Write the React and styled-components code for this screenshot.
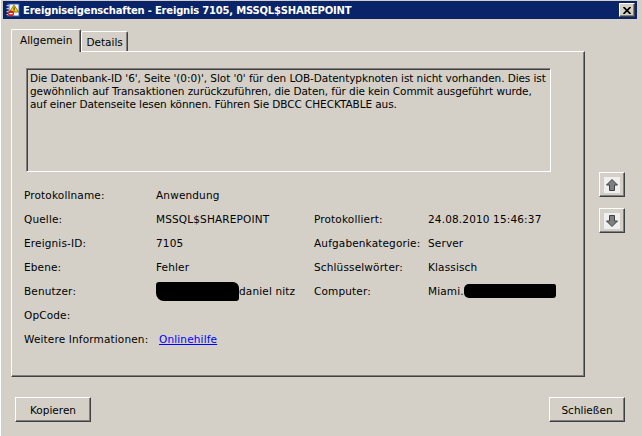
import React from 'react';
import styled, { createGlobalStyle } from 'styled-components';

const FONT = `"DejaVu Sans", "Liberation Sans", sans-serif`;

const GlobalStyle = createGlobalStyle`
  html, body { margin: 0; padding: 0; background: #d4d0c8; }
  body {
    width: 642px; height: 436px; overflow: hidden;
    font-family: ${FONT}; font-size: 10.5px; color: #000;
  }
`;

const Window = styled.div`
  width: 642px; height: 436px; box-sizing: border-box;
  padding: 1px 5px 0 2px;
  display: flex; flex-direction: column;
  background: #d4d0c8;
  border-left: 1px solid #fff;
`;

const TitleBar = styled.div`
  height: 18px; flex: none;
  background: #0a246a;
  display: flex; align-items: center;
  padding: 0 2px 0 3px; gap: 3px;
  color: #fff; font-weight: bold; font-size: 10px;
`;

const TitleText = styled.span`
  flex: 1; white-space: nowrap; letter-spacing: -0.2px;
`;

const RaisedBtn = styled.button`
  box-sizing: border-box;
  background: #d4d0c8;
  border: 1px solid; border-color: #fff #404040 #404040 #fff;
  box-shadow: inset -1px -1px 0 #808080;
  padding: 0; margin: 0;
  display: flex; align-items: center; justify-content: center;
  font-family: ${FONT}; font-size: 10.5px; color: #000;
`;

const CloseBtn = styled(RaisedBtn)`
  width: 16px; height: 14px;
`;

const Body = styled.div`
  display: flex; margin-top: 10px; padding-left: 8px; gap: 14px;
`;

const MainCol = styled.div`
  width: 574px; display: flex; flex-direction: column;
`;

const TabStrip = styled.div`
  display: flex; align-items: flex-end; height: 22px;
`;

const Tab = styled.div`
  box-sizing: border-box;
  height: ${p => (p.$active ? 23 : 20)}px;
  margin-bottom: ${p => (p.$active ? -1 : 0)}px;
  padding: 0 ${p => (p.$active ? 8 : 4)}px ${p => (p.$active ? 2 : 0)}px;
  display: flex; align-items: center;
  background: #d4d0c8;
  border-top: 1px solid #fff;
  border-left: 1px solid #fff;
  border-right: 1px solid #404040;
  box-shadow: inset -1px 0 0 #808080;
  border-radius: 2px 2px 0 0;
  position: relative; z-index: ${p => (p.$active ? 2 : 1)};
  white-space: nowrap;
`;

const Panel = styled.div`
  box-sizing: border-box; height: 326px;
  border: 1px solid; border-color: #fff #404040 #404040 #fff;
  box-shadow: inset -1px -1px 0 #808080;
  padding: 16px 0 0 14px;
  position: relative; z-index: 1;
`;

const MessageBox = styled.div`
  box-sizing: border-box; width: 525px; height: 104px;
  border: 1px solid; border-color: #808080 #fff #fff #808080;
  box-shadow: inset 1px 1px 0 #404040;
  padding: 3px 0 0 3px;
  line-height: 13px;
  letter-spacing: -0.08px;
`;

const Line = styled.div`
  white-space: nowrap;
`;

const Fields = styled.div`
  display: grid;
  grid-template-columns: 132px 158px 114px 1fr;
  grid-auto-rows: 24px;
  margin: 11px 0 0 -2px;
  align-items: center;
  letter-spacing: 0.15px;
`;

const Cell = styled.div`
  white-space: nowrap; display: flex; align-items: center;
  grid-column: ${p => p.$col || 'auto'};
`;

const Redact = styled.span`
  display: inline-block; background: #000;
  width: ${p => p.$w}px; height: ${p => p.$h}px;
  border-radius: ${p => p.$r || '4px 2px 3px 6px'};
`;

const Link = styled.a`
  color: #0000ff; text-decoration: underline; margin-left: 3px; cursor: pointer;
`;

const SideCol = styled.div`
  display: flex; flex-direction: column; gap: 11px; padding-top: 143px;
`;

const ArrowBtn = styled(RaisedBtn)`
  width: 26px; height: 25px;
`;

const Footer = styled.div`
  display: flex; justify-content: space-between;
  margin-top: 20px; padding: 0 12px 0 12px;
`;

const DlgBtn = styled(RaisedBtn)`
  width: 76px; height: 25px;
`;

const TitleIcon = () => (
  <svg width="14" height="14" viewBox="0 0 14 14">
    <rect x="1.5" y="0.5" width="12" height="13" fill="#3a6fc4" stroke="#1a3f84" />
    <rect x="3.5" y="1.5" width="9" height="11" fill="#f4f4f4" />
    {[2, 5, 8, 11].map(y => (
      <rect key={y} x="0.5" y={y} width="3" height="1.2" fill="#c0c0c0" />
    ))}
    <polygon points="8,2 12.5,9 3.5,9" fill="#ffd800" stroke="#7a6000" strokeWidth="0.8" />
    <rect x="7.6" y="4.3" width="0.9" height="2.6" fill="#000" />
    <rect x="7.6" y="7.4" width="0.9" height="0.9" fill="#000" />
    <circle cx="5" cy="10.5" r="3" fill="#d22020" />
    <rect x="3.3" y="10" width="3.4" height="1.2" fill="#fff" />
  </svg>
);

const CloseX = () => (
  <svg width="8" height="7" viewBox="0 0 8 7">
    <path d="M0.5 0 L7.5 7 M7.5 0 L0.5 7" stroke="#000" strokeWidth="1.7" />
  </svg>
);

const Arrow = ({ down }) => (
  <svg width="16" height="16" viewBox="0 0 16 16">
    <rect x="0" y="0" width="16" height="16" fill="#efefef" />
    <g transform={down ? 'rotate(180 8 8)' : undefined}>
      <polygon points="8,2.5 13.5,8 10.5,8 10.5,13.5 5.5,13.5 5.5,8 2.5,8"
        fill="#808080" stroke="#404040" strokeWidth="1" />
    </g>
  </svg>
);

export default function App() {
  return (
    <>
      <GlobalStyle />
      <Window>
        <TitleBar>
          <TitleIcon />
          <TitleText>Ereigniseigenschaften - Ereignis 7105, MSSQL$SHAREPOINT</TitleText>
          <CloseBtn aria-label="Schließen"><CloseX /></CloseBtn>
        </TitleBar>
        <Body>
          <MainCol>
            <TabStrip>
              <Tab $active>Allgemein</Tab>
              <Tab>Details</Tab>
            </TabStrip>
            <Panel>
              <MessageBox>
                <Line>Die Datenbank-ID '6', Seite '(0:0)', Slot '0' für den LOB-Datentypknoten ist nicht vorhanden. Dies ist</Line>
                <Line>gewöhnlich auf Transaktionen zurückzuführen, die Daten, für die kein Commit ausgeführt wurde,</Line>
                <Line>auf einer Datenseite lesen können. Führen Sie DBCC CHECKTABLE aus.</Line>
              </MessageBox>
              <Fields>
                <Cell>Protokollname:</Cell>
                <Cell $col="2 / 5">Anwendung</Cell>

                <Cell>Quelle:</Cell>
                <Cell>MSSQL$SHAREPOINT</Cell>
                <Cell>Protokolliert:</Cell>
                <Cell>24.08.2010 15:46:37</Cell>

                <Cell>Ereignis-ID:</Cell>
                <Cell>7105</Cell>
                <Cell>Aufgabenkategorie:</Cell>
                <Cell>Server</Cell>

                <Cell>Ebene:</Cell>
                <Cell>Fehler</Cell>
                <Cell>Schlüsselwörter:</Cell>
                <Cell>Klassisch</Cell>

                <Cell>Benutzer:</Cell>
                <Cell><Redact $w={83} $h={19} $r="3px 6px 3px 8px" />daniel nitz</Cell>
                <Cell>Computer:</Cell>
                <Cell>Miami.<Redact $w={92} $h={14} $r="5px 2px 3px 5px" /></Cell>

                <Cell>OpCode:</Cell>
                <Cell $col="2 / 5"></Cell>

                <Cell>Weitere Informationen:</Cell>
                <Cell $col="2 / 5"><Link>Onlinehilfe</Link></Cell>
              </Fields>
            </Panel>
          </MainCol>
          <SideCol>
            <ArrowBtn aria-label="Vorheriges Ereignis"><Arrow /></ArrowBtn>
            <ArrowBtn aria-label="Nächstes Ereignis"><Arrow down /></ArrowBtn>
          </SideCol>
        </Body>
        <Footer>
          <DlgBtn>Kopieren</DlgBtn>
          <DlgBtn>Schließen</DlgBtn>
        </Footer>
      </Window>
    </>
  );
}
